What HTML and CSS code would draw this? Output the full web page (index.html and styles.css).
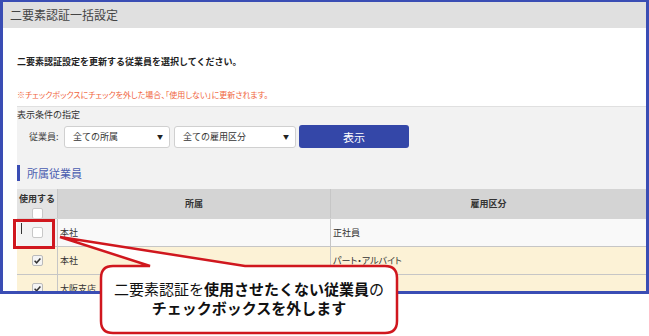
FILE: index.html
```html
<!DOCTYPE html>
<html lang="ja">
<head>
<meta charset="utf-8">
<title>二要素認証一括設定</title>
<link rel="stylesheet" href="styles.css">
</head>
<body>
<div class="page">
  <div class="frame">
    <div class="titlebar">二要素認証一括設定</div>
    <div class="content">
      <p class="lead">二要素認証設定を更新する従業員を選択してください。</p>
      <p class="note">※チェックボックスにチェックを外した場合、「使用しない」に更新されます。</p>
      <div class="panel">
        <div class="panel-title">表示条件の指定</div>
        <div class="filters">
          <span class="filter-label">従業員:</span>
          <div class="select sel-dept"><span>全ての所属</span><span class="arrow">▼</span></div>
          <div class="select sel-type"><span>全ての雇用区分</span><span class="arrow">▼</span></div>
          <button class="btn">表示</button>
        </div>
        <div class="section-head">所属従業員</div>
      </div>
      <div class="table">
        <div class="row head">
          <div class="cell c1 hc1"><span class="hlabel">使用する</span><span class="box hbox"></span></div>
          <div class="cell c2 center">所属</div>
          <div class="cell c3 center">雇用区分</div>
        </div>
        <div class="row r-off">
          <div class="cell c1 boxcell"><span class="box"></span></div>
          <div class="cell c2">本社</div>
          <div class="cell c3">正社員</div>
        </div>
        <div class="row r-on">
          <div class="cell c1 boxcell"><span class="box checked"><svg viewBox="0 0 11 11" width="11" height="11"><path d="M2.6 5.8 L4.6 7.8 L8.4 3.4" fill="none" stroke="#333" stroke-width="1.5"/></svg></span></div>
          <div class="cell c2">本社</div>
          <div class="cell c3 palt">パート・アルバイト</div>
        </div>
        <div class="row r-on">
          <div class="cell c1 boxcell"><span class="box checked"><svg viewBox="0 0 11 11" width="11" height="11"><path d="M2.6 5.8 L4.6 7.8 L8.4 3.4" fill="none" stroke="#333" stroke-width="1.5"/></svg></span></div>
          <div class="cell c2">大阪支店</div>
          <div class="cell c3"></div>
        </div>
      </div>
    </div>
  </div>

  <div class="highlight"><span class="caret"></span></div>

  <svg class="callout-shape" width="649" height="336" viewBox="0 0 649 336">
    <path d="M113 266 L150 266 L60 237 L245 266 L385 266 Q397 266 397 278 L397 321 Q397 333 385 333 L113 333 Q101 333 101 321 L101 278 Q101 266 113 266 Z" fill="#fff" stroke="#d0171e" stroke-width="2.5" stroke-linejoin="miter"/>
  </svg>
  <div class="callout-text">
    <div class="cl">二要素認証を<b>使用させたくない従業員</b>の</div>
    <div class="cl"><b>チェックボックスを外します</b></div>
  </div>
</div>
</body>
</html>
```

FILE: styles.css
```css
* { box-sizing: border-box; }
html, body { margin: 0; padding: 0; background: #fff; }
body {
  font-family: "Noto Sans CJK JP", "Noto Sans", sans-serif;
  color: #333;
}
.page { position: relative; width: 649px; height: 336px; overflow: hidden; }

.frame {
  width: 649px;
  height: 294px;
  border: 3px solid #3a4db4;
  border-top-width: 2px;
  overflow: hidden;
  display: flex;
  flex-direction: column;
}
.titlebar {
  height: 26px;
  flex: none;
  background: #e0e0e0;
  color: #444;
  font-size: 12px;
  line-height: 26px;
  padding-left: 7px;
}
.content { padding-left: 14px; }
.lead {
  margin: 27px 0 0;
  font-size: 9px;
  line-height: 14px;
  font-weight: bold;
  color: #222;
}
.note {
  margin: 20px 0 0;
  font-size: 8px;
  line-height: 12px;
  color: #f0643c;
  font-feature-settings: "palt";
}
.panel {
  margin-top: 5px;
  background: #f2f2f2;
  border-top: 1px solid #e0e0e0;
  padding-top: 2px;
  padding-bottom: 8px;
}
.panel-title {
  font-size: 9px;
  line-height: 12px;
  color: #333;
}
.filters {
  display: flex;
  align-items: center;
  margin-top: 4px;
  padding-left: 12px;
  height: 23px;
}
.filter-label {
  font-size: 9px;
  color: #444;
  width: 35px;
}
.select {
  height: 22px;
  background: #fff;
  border: 1px solid #d0d0d0;
  border-radius: 3px;
  display: flex;
  align-items: center;
  justify-content: space-between;
  padding: 0 6px 0 8px;
  font-size: 9px;
  color: #333;
}
.arrow { font-size: 6px; color: #222; }
.sel-dept { width: 106px; margin-right: 4px; }
.sel-type { width: 122px; margin-right: 3px; }
.btn {
  width: 110px;
  height: 23px;
  background: #3447a8;
  border: none;
  border-radius: 3px;
  color: #fff;
  font-family: inherit;
  font-size: 11px;
  padding: 0;
}
.section-head {
  margin-top: 17px;
  height: 16px;
  border-left: 3px solid #3a4db4;
  padding-left: 7px;
  font-size: 11px;
  line-height: 16px;
  color: #4a5db0;
}

.table { font-size: 9px; }
.row { display: flex; border-bottom: 1px solid #c6c6c6; }
.cell { display: flex; align-items: center; }
.c1 { width: 41px; border-right: 1px solid #c6c6c6; flex: none; }
.c2 { width: 273px; border-right: 1px solid #c6c6c6; flex: none; padding-left: 2px; }
.c3 { flex: 1; padding-left: 2px; }
.center { justify-content: center; padding-left: 0; }
.head { height: 30px; background: #d4d4d4; font-weight: bold; color: #333; border-bottom: 1px solid #d4d4d4; }
.head .c1 { background: #e3e3e3; }
.hc1 { flex-direction: column; align-items: center; justify-content: flex-start; overflow: hidden; padding-top: 4px; }
.hlabel { line-height: 12px; }
.hbox { margin-top: 3px; border: none; }
.row.r-off { height: 28px; background: #f9f9f9; }
.row.r-off .c1 { background: #f3f3f3; }
.row.r-on { height: 28px; background: #fcf2d6; }
.boxcell { justify-content: center; }
.box {
  display: block;
  width: 11px;
  height: 11px;
  background: #fff;
  border: 1px solid #c8c8c8;
  border-radius: 2px;
  flex: none;
}
.box.checked { background: #f4f4f4; border-color: #bbb; }
.box svg { display: block; margin: -1px 0 0 -1px; }
.palt { font-feature-settings: "palt"; }

.highlight {
  position: absolute;
  left: 13px;
  top: 219px;
  width: 42px;
  height: 30px;
  border: 3px solid #d0171e;
}
.caret {
  position: absolute;
  left: 5px;
  top: 1px;
  width: 1px;
  height: 11px;
  background: #333;
}
.callout-shape { position: absolute; left: 0; top: 0; }
.callout-text {
  position: absolute;
  left: 101px;
  top: 266px;
  width: 296px;
  height: 67px;
  padding-bottom: 3px;
  display: flex;
  flex-direction: column;
  justify-content: center;
  align-items: center;
  font-size: 15px;
  line-height: 19px;
  color: #111;
}
.cl { height: 19px; line-height: 19px; white-space: nowrap; }
.callout-text b { font-weight: bold; }
```
